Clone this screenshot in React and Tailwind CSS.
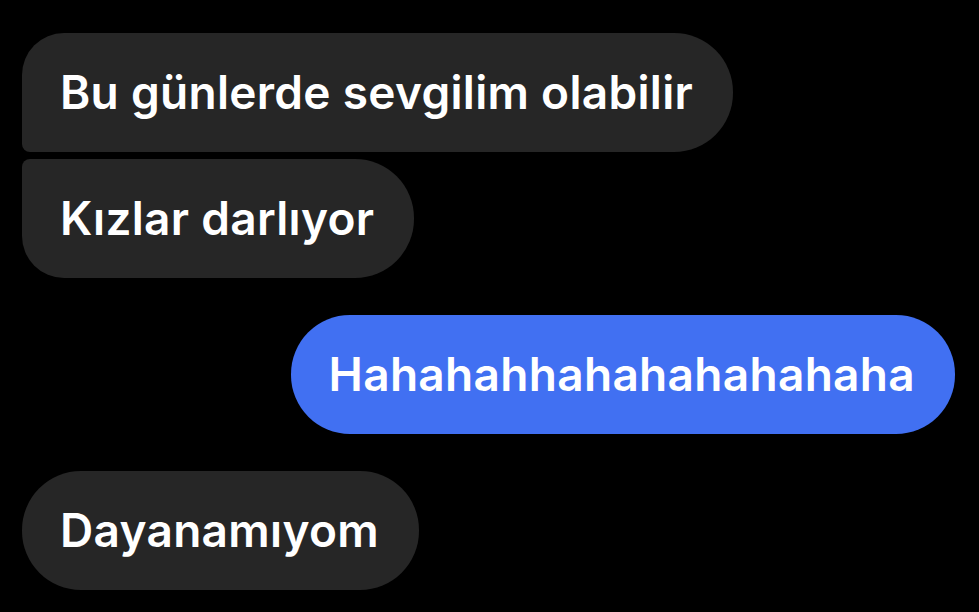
export default function App() {
  const bubble =
    'h-[119px] flex items-center pl-[38px] pr-[40px] text-white text-[46px] font-semibold tracking-[0.3px] whitespace-nowrap';

  return (
    <div
      className="w-[979px] h-[612px] bg-black pt-[33px] pl-[22px] pr-[24px] flex flex-col overflow-hidden"
      style={{ fontFamily: 'Inter, "Noto Sans", sans-serif' }}
    >
      <div className="flex flex-col items-start gap-[7px]">
        <div className={`${bubble} bg-[#262626] rounded-tl-[42px] rounded-bl-[8px] rounded-r-[59px]`}>
          Bu günlerde sevgilim olabilir
        </div>
        <div className={`${bubble} bg-[#262626] rounded-tl-[8px] rounded-bl-[42px] rounded-r-[59px]`}>
          Kızlar darlıyor
        </div>
      </div>

      <div className="flex justify-end mt-[37px]">
        <div className={`${bubble} bg-[#4170f2] rounded-[59px]`}>Hahahahhahahahahahaha</div>
      </div>

      <div className="flex justify-start mt-[37px]">
        <div className={`${bubble} bg-[#262626] rounded-[59px]`}>Dayanamıyom</div>
      </div>
    </div>
  );
}
